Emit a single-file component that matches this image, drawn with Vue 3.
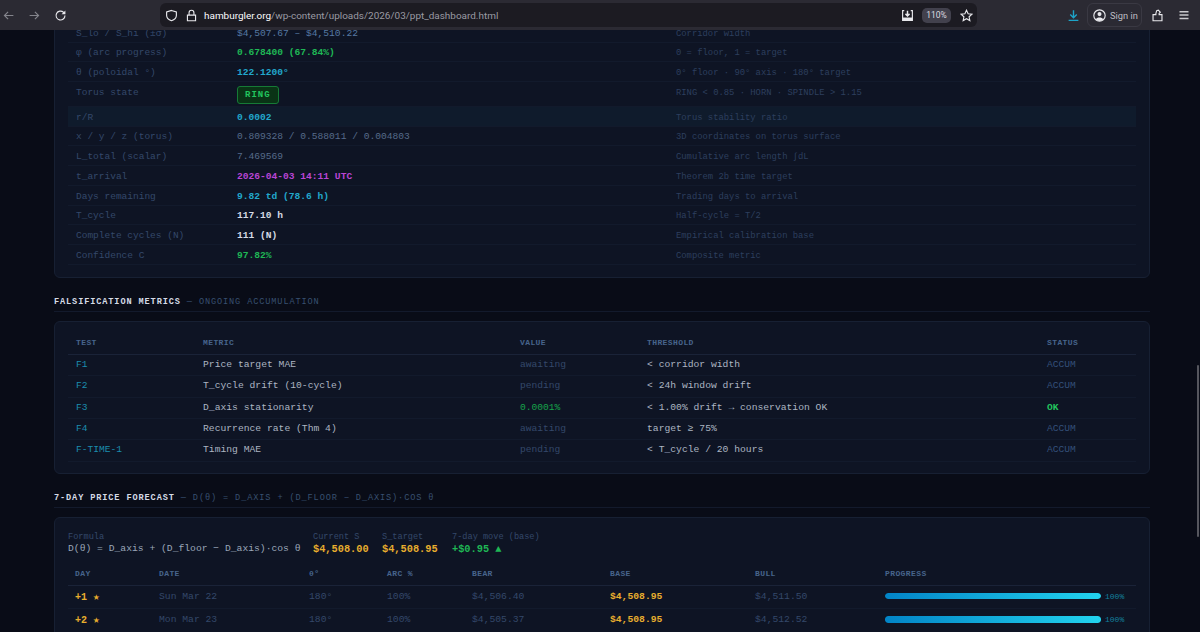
<script setup>
const metaRows = [
  { label: 'S_lo / S_hi (±σ)', value: '$4,507.67 – $4,510.22', cls: 'steel', note: 'Corridor width' },
  { label: 'φ (arc progress)', value: '0.678400 (67.84%)', cls: 'green', note: '0 = floor, 1 = target' },
  { label: 'θ (poloidal °)', value: '122.1200°', cls: 'cyan', note: '0° floor · 90° axis · 180° target' },
  { label: 'Torus state', badge: 'RING', note: 'RING < 0.85 · HORN · SPINDLE > 1.15' },
  { label: 'r/R', value: '0.0002', cls: 'cyan', note: 'Torus stability ratio', hi: true },
  { label: 'x / y / z (torus)', value: '0.809328 / 0.588011 / 0.004803', cls: 'gray', note: '3D coordinates on torus surface' },
  { label: 'L_total (scalar)', value: '7.469569', cls: 'gray', note: 'Cumulative arc length ∫dL' },
  { label: 't_arrival', value: '2026-04-03 14:11 UTC', cls: 'purple', note: 'Theorem 2b time target' },
  { label: 'Days remaining', value: '9.82 td (78.6 h)', cls: 'cyan', note: 'Trading days to arrival' },
  { label: 'T_cycle', value: '117.10 h', cls: 'white', note: 'Half-cycle = T/2' },
  { label: 'Complete cycles (N)', value: '111 (N)', cls: 'white', note: 'Empirical calibration base' },
  { label: 'Confidence C', value: '97.82%', cls: 'green', note: 'Composite metric' },
]
const tests = [
  ['F1', 'Price target MAE', 'awaiting', '< corridor width', 'ACCUM'],
  ['F2', 'T_cycle drift (10-cycle)', 'pending', '< 24h window drift', 'ACCUM'],
  ['F3', 'D_axis stationarity', '0.0001%', '< 1.00% drift → conservation OK', 'OK'],
  ['F4', 'Recurrence rate (Thm 4)', 'awaiting', 'target ≥ 75%', 'ACCUM'],
  ['F-TIME-1', 'Timing MAE', 'pending', '< T_cycle / 20 hours', 'ACCUM'],
]
const forecast = [
  ['+1', 'Sun Mar 22', '180°', '100%', '$4,506.40', '$4,508.95', '$4,511.50', 100],
  ['+2', 'Mon Mar 23', '180°', '100%', '$4,505.37', '$4,508.95', '$4,512.52', 100],
]
</script>

<template>
  <div class="app">
    <header class="chrome">
      <svg class="ico nav dim back" viewBox="0 0 16 16"><path d="M14 8H3M7.500 3.500 3 8l4.500 4.500"/></svg>
      <svg class="ico nav dim fwd" viewBox="0 0 16 16"><path d="M2 8h11M8.500 3.500 13 8l-4.500 4.500"/></svg>
      <svg class="ico nav fwd" viewBox="0 0 16 16"><path d="M13.500 8a5.500 5.500 0 1 1-1.800-4L13.500 5.500"/><path class="fill" d="M14 1.800V6.500H9.300Z"/></svg>
      <div class="urlbar">
        <svg class="ico small" viewBox="0 0 16 16"><path d="M8 1.800 14 3.500V8c0 3-2.500 5.200-6 6.400C4.500 13.200 2 11 2 8V3.500Z"/></svg>
        <svg class="ico small lock" viewBox="0 0 16 16"><path d="M5 7V4.500a3 3 0 0 1 6 0V7M3 7.500h10v7H3Z"/></svg>
        <span class="url"><b>hamburgler.org</b>/wp-content/uploads/2026/03/ppt_dashboard.html</span>
        <svg class="ico shot" viewBox="0 0 16 16"><path d="M4 2H2v12h12V2h-2"/><path d="M8 2v6M5.500 6 8 8.500 10.500 6" stroke-width="1.800"/><path class="fill" d="M2 10.500h12V14H2Z"/></svg>
        <span class="zoom">110%</span>
        <svg class="ico star" viewBox="0 0 16 16"><path d="m8 1.500 2 4.300 4.600.6-3.400 3.200.9 4.600L8 11.900l-4.100 2.300.9-4.600L1.400 6.400 6 5.800Z"/></svg>
      </div>
      <svg class="ico dl" viewBox="0 0 16 16"><path d="M8 1.500v9M4 6.800 8 10.800l4-4M2 14h12"/></svg>
      <div class="signin">
        <svg class="ico acct" viewBox="0 0 16 16"><circle cx="8" cy="8" r="7"/><circle cx="8" cy="6.300" r="2.500" class="fill"/><path d="M3.500 12.800c1-3.200 8-3.200 9 0a7 7 0 0 1-9 0Z" class="fill"/></svg>
        <span>Sign in</span>
      </div>
      <svg class="ico ext" viewBox="0 0 16 16"><path d="M2.500 14.500V7H6V5.500L7 2l2-.5 2.500 2.500L10 5.500V7h3.500v7.500Z"/></svg>
      <svg class="ico menu" viewBox="0 0 16 16"><path d="M2 3.500h12M2 8h12M2 12.500h12"/></svg>
    </header>

    <main class="viewport">
      <div class="page">
        <section class="card first">
          <div
            v-for="r in metaRows"
            :key="r.label"
            class="meta-row"
            :class="{ hi: r.hi, tall: r.badge }"
          >
            <span class="label">{{ r.label }}</span>
            <span v-if="r.badge" class="badge">{{ r.badge }}</span>
            <span v-else :class="r.cls">{{ r.value }}</span>
            <span class="note">{{ r.note }}</span>
          </div>
        </section>

        <h2 class="section"><b>FALSIFICATION METRICS</b> — ONGOING ACCUMULATION</h2>
        <section class="card tests">
          <div class="test-row head">
            <span>TEST</span><span>METRIC</span><span>VALUE</span><span>THRESHOLD</span><span>STATUS</span>
          </div>
          <div v-for="t in tests" :key="t[0]" class="test-row">
            <span class="teal">{{ t[0] }}</span>
            <span class="light">{{ t[1] }}</span>
            <span :class="t[4] === 'OK' ? 'dgreen' : 'faint'">{{ t[2] }}</span>
            <span class="light">{{ t[3] }}</span>
            <span :class="t[4] === 'OK' ? 'okbold' : 'accum'">{{ t[4] }}</span>
          </div>
        </section>

        <h2 class="section"><b>7-DAY PRICE FORECAST</b> — D(θ) = D_AXIS + (D_FLOOR − D_AXIS)·COS θ</h2>
        <section class="card forecast">
          <div class="formula">
            <div class="f-cell f-main"><small>Formula</small><span>D(θ) = D_axis + (D_floor − D_axis)·cos θ</span></div>
            <div class="f-cell f-cur"><small>Current S</small><strong class="gold">$4,508.00</strong></div>
            <div class="f-cell f-tar"><small>S_target</small><strong class="gold">$4,508.95</strong></div>
            <div class="f-cell"><small>7-day move (base)</small><strong class="green">+$0.95 ▲</strong></div>
          </div>
          <div class="fc-row head">
            <span>DAY</span><span>DATE</span><span>θ°</span><span>ARC %</span><span>BEAR</span><span>BASE</span><span>BULL</span><span>PROGRESS</span>
          </div>
          <div v-for="f in forecast" :key="f[0]" class="fc-row">
            <strong class="gold day">{{ f[0] }}<i class="fav">★</i></strong>
            <span class="faint2">{{ f[1] }}</span>
            <span class="faint2">{{ f[2] }}</span>
            <span class="faint2">{{ f[3] }}</span>
            <span class="faint2">{{ f[4] }}</span>
            <strong class="gold base">{{ f[5] }}</strong>
            <span class="faint2">{{ f[6] }}</span>
            <span class="prog">
              <span class="track"><span class="bar" :style="{ width: f[7] + '%' }"></span></span>
              <em>{{ f[7] }}%</em>
            </span>
          </div>
        </section>
      </div>
      <div class="thumb"></div>
    </main>
  </div>
</template>

<style>
html, body { margin: 0; background: #090c17; }
</style>

<style scoped>
.app {
  width: 1200px;
  height: 632px;
  display: flex;
  flex-direction: column;
  overflow: hidden;
  font-family: "Liberation Mono", "DejaVu Sans Mono", monospace;
  font-size: 9.600px;
}
.chrome {
  flex: 0 0 30px;
  display: flex;
  align-items: center;
  background: #2b2a33;
  color: #fbfbfe;
}
.ico { fill: none; stroke: #e8e8ec; stroke-width: 1.400; flex: none; }
.ico .fill { fill: #e8e8ec; stroke: none; }
.nav { width: 13px; height: 13px; }
.back { margin-left: 2px; }
.fwd { margin-left: 13px; }
.dim { stroke: #84848c; }
.urlbar {
  margin-left: 93px;
  width: 817px;
  height: 24px;
  box-sizing: border-box;
  padding-left: 5px;
  background: #1c1b22;
  border-radius: 6px;
  display: flex;
  align-items: center;
  font-family: Roboto, "Open Sans", sans-serif;
}
.small { width: 13px; height: 13px; }
.lock { margin-left: 7px; }
.url {
  margin-left: 6px;
  flex: 1;
  font-size: 9.950px;
  color: #9a9aa2;
  white-space: nowrap;
}
.url b { color: #fbfbfe; font-weight: 400; }
.shot { width: 13px; height: 13px; }
.zoom {
  margin-left: 8px;
  width: 29px;
  height: 15px;
  line-height: 15px;
  text-align: center;
  background: #42414d;
  border-radius: 5px;
  font-size: 8.500px;
  color: #dcdce0;
}
.star { width: 13px; height: 13px; margin: 0 4px 0 9px; }
.dl { width: 13px; height: 13px; margin-left: 90px; stroke: #1da4c9; stroke-width: 1.700; }
.signin {
  margin-left: 7px;
  width: 55px;
  height: 24px;
  box-sizing: border-box;
  border: 1px solid #3a3943;
  border-radius: 6px;
  display: flex;
  align-items: center;
  gap: 4px;
  padding-left: 5px;
  font-family: Roboto, "Open Sans", sans-serif;
  font-size: 9.300px;
  color: #bdbdc3;
}
.acct { width: 13px; height: 13px; }
.ext { width: 13px; height: 13px; margin-left: 9px; }
.menu { width: 12px; height: 12px; margin-left: 14px; stroke-width: 2; stroke: #c8c8cc; }

.viewport {
  position: relative;
  flex: 1;
  overflow: hidden;
  background: #090c17;
}
.page { padding: 0 50px 0 54px; }
.thumb {
  position: absolute;
  right: 1px;
  top: 335px;
  width: 2px;
  height: 172px;
  background: #55565e;
  border-radius: 1px;
}
.card {
  background: #0e1424;
  border: 1px solid #172033;
  border-radius: 6px;
  padding: 11px 13px;
}
.first { margin-top: -19.100px; padding-bottom: 12px; }

.meta-row {
  display: grid;
  grid-template-columns: 161px 439px 1fr;
  height: 19.700px;
  box-sizing: border-box;
  padding: 4.700px 0 0 8px;
  line-height: 11px;
  border-bottom: 1px solid #121a2c;
  white-space: nowrap;
}
.meta-row.tall { height: 25.100px; padding-top: 4.700px; }
.meta-row.tall .badge { margin-top: -0.700px; }
.meta-row.hi { background: #0f1b2c; }
.label { color: #34486a; font-size: 9.500px; }
.note { color: #2d3f5e; font-size: 8.850px; padding-top: 1px; }
.steel { color: #5679a3; }
.green { color: #1fb755; font-weight: 700; }
.cyan { color: #22a8cc; font-weight: 700; }
.gray { color: #566b8a; }
.purple { color: #b945d4; font-weight: 700; }
.white { color: #d5dbe6; font-weight: 700; }
.badge {
  justify-self: start;
  padding: 0 7px;
  height: 16px;
  line-height: 16px;
  background: #0a3316;
  border: 1px solid #167a36;
  border-radius: 3px;
  color: #22c55e;
  font-size: 9px;
  font-weight: 700;
  letter-spacing: 1px;
}

.section {
  margin: 19px 0 9.500px;
  padding-bottom: 4px;
  border-bottom: 1px solid #131a2c;
  font-size: 8.600px;
  line-height: 10px;
  font-weight: 400;
  letter-spacing: 0.880px;
  color: #385070;
  white-space: nowrap;
}
.section b { color: #d5dbe6; font-weight: 700; }

.test-row {
  display: grid;
  grid-template-columns: 127px 317px 127px 400px 1fr;
  height: 21.300px;
  box-sizing: border-box;
  padding: 4px 0 0 8px;
  line-height: 11px;
  border-bottom: 1px solid #121a2c;
  white-space: nowrap;
}
.test-row.head, .fc-row.head {
  color: #47648c;
  font-size: 8px;
  font-weight: 700;
  letter-spacing: 0.400px;
  border-bottom: 1px solid #1a2338;
}
.test-row.head { height: 22px; padding-top: 4px; }
.teal { color: #1b8dae; }
.light { color: #acb5c2; font-size: 9.700px; }
.faint { color: #34486a; }
.dgreen { color: #16a34a; }
.accum { color: #34507a; }
.okbold { color: #22c55e; font-weight: 700; }

.forecast { padding-top: 14px; }
.formula {
  display: flex;
  height: 31px;
  white-space: nowrap;
}
.f-cell { display: flex; flex-direction: column; }
.f-cell small { font-size: 8.600px; line-height: 11px; color: #34486a; height: 11px; }
.f-cell span { font-size: 9.700px; color: #9aa6b8; line-height: 12px; }
.f-cell strong { font-size: 10.300px; line-height: 12px; }
.f-main { width: 245px; }
.f-cur { width: 69px; }
.f-tar { width: 70px; }
.gold { color: #e8ae2e; font-weight: 700; }

.fc-row {
  display: grid;
  grid-template-columns: 84px 150px 78px 85px 138px 145px 130px 1fr;
  height: 23.500px;
  box-sizing: border-box;
  padding: 5px 0 0 7px;
  line-height: 11px;
  border-bottom: 1px solid #121a2c;
  white-space: nowrap;
}
.fc-row.head { height: 22.500px; padding-top: 5px; }
.faint2 { color: #34486a; font-size: 9.700px; }
.base { font-size: 9.700px; }
.day { font-size: 10px; line-height: 13px; }
.fav { font-style: normal; font-size: 11px; margin-left: 6px; font-weight: 400; }
.prog { display: flex; align-items: center; gap: 4px; height: 11px; }
.track {
  flex: 0 0 216px;
  height: 6.500px;
  background: #0a1220;
  border-radius: 3px;
  overflow: hidden;
}
.bar {
  display: block;
  height: 100%;
  background: linear-gradient(90deg, #0284c7, #22d3ee);
  border-radius: 3px;
}
.prog em { font-style: normal; font-size: 8px; color: #13809e; }
</style>
